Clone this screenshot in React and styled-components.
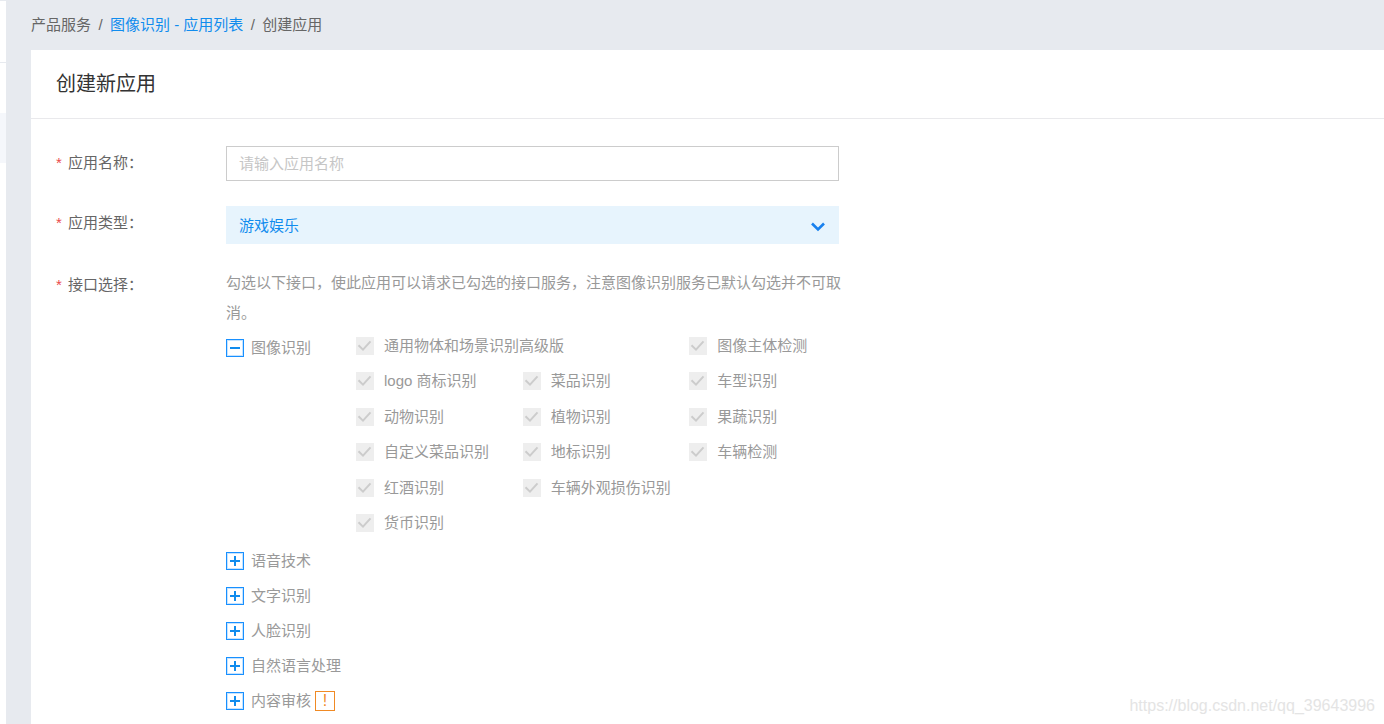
import React, { useState } from "react";
import styled, { createGlobalStyle } from "styled-components";

const imageApis = [
  { name: "通用物体和场景识别高级版", wide: true },
  { name: "图像主体检测" },
  { name: "logo 商标识别" },
  { name: "菜品识别" },
  { name: "车型识别" },
  { name: "动物识别" },
  { name: "植物识别" },
  { name: "果蔬识别" },
  { name: "自定义菜品识别" },
  { name: "地标识别" },
  { name: "车辆检测" },
  { name: "红酒识别" },
  { name: "车辆外观损伤识别", wide: true },
  { name: "货币识别" },
];

const groups = [
  { id: "image", name: "图像识别", apis: imageApis },
  { id: "speech", name: "语音技术" },
  { id: "ocr", name: "文字识别" },
  { id: "face", name: "人脸识别" },
  { id: "nlp", name: "自然语言处理" },
  { id: "censor", name: "内容审核", warn: true },
];

const ToggleIcon = ({ open }) => (
  <svg width="18" height="18" viewBox="0 0 18 18" fill="none" aria-hidden="true">
    <rect x="1" y="1" width="16" height="16" stroke="#1890ff" strokeWidth="2" strokeOpacity="0.25" />
    <rect x="0.5" y="0.5" width="17" height="17" stroke="#1890ff" />
    <path d={open ? "M4 9H14" : "M4 9H14M9 4V14"} stroke="#108cee" strokeWidth="2" />
  </svg>
);

const ApiGroup = ({ group, open, onToggle }) => (
  <Group>
    <GroupHead>
      <Toggle type="button" $open={open} aria-expanded={open} onClick={onToggle}>
        <ToggleIcon open={open} />
        {group.name}
      </Toggle>
      {group.warn && <Warn>!</Warn>}
    </GroupHead>
    {open && group.apis && (
      <ApiGrid>
        {group.apis.map((api) => (
          <ApiLabel key={api.name} $wide={api.wide}>
            <CheckWrap>
              <Check type="checkbox" defaultChecked disabled />
              <CheckMark viewBox="0 0 18 18" fill="none" aria-hidden="true">
                <path d="M2.5 8.2L7 12.6L14.5 4.4" stroke="#ccc" strokeWidth="2" />
              </CheckMark>
            </CheckWrap>
            {api.name}
          </ApiLabel>
        ))}
      </ApiGrid>
    )}
  </Group>
);

const App = () => {
  const [openId, setOpenId] = useState("image");

  return (
    <>
      <GlobalStyle />
      <Page>
        <Side>
          <SideTop />
          <SideGap />
          <SideActive />
        </Side>
        <Main>
          <Breadcrumb>
            <span>产品服务</span>
            <Slash>/</Slash>
            <a href="#list">图像识别 - 应用列表</a>
            <Slash>/</Slash>
            <span>创建应用</span>
          </Breadcrumb>
          <Card>
            <Title>创建新应用</Title>
            <Form>
              <Row>
                <Label htmlFor="appName">
                  <Star>*</Star>应用名称：
                </Label>
                <Field>
                  <Input id="appName" type="text" placeholder="请输入应用名称" />
                </Field>
              </Row>
              <Row>
                <Label htmlFor="appType">
                  <Star>*</Star>应用类型：
                </Label>
                <Field>
                  <SelectWrap>
                    <Select id="appType" defaultValue="game">
                      <option value="game">游戏娱乐</option>
                    </Select>
                    <Arrow viewBox="0 0 16 10" fill="none" aria-hidden="true">
                      <path d="M2 1.5L8 7.5L14 1.5" stroke="#1880ee" strokeWidth="2.6" />
                    </Arrow>
                  </SelectWrap>
                </Field>
              </Row>
              <Row>
                <Label as="div" id="apiLabel">
                  <Star>*</Star>接口选择：
                </Label>
                <Field role="group" aria-labelledby="apiLabel">
                  <Desc>
                    勾选以下接口，使此应用可以请求已勾选的接口服务，注意图像识别服务已默认勾选并不可取消。
                  </Desc>
                  {groups.map((group) => (
                    <ApiGroup
                      key={group.id}
                      group={group}
                      open={openId === group.id}
                      onToggle={() => setOpenId(openId === group.id ? "" : group.id)}
                    />
                  ))}
                </Field>
              </Row>
            </Form>
          </Card>
        </Main>
        <Watermark>https://blog.csdn.net/qq_39643996</Watermark>
      </Page>
    </>
  );
};

const GlobalStyle = createGlobalStyle`
  * {
    box-sizing: border-box;
  }

  body {
    margin: 0;
    background: #e7eaef;
    color: #666;
    font-family: "Liberation Sans", "Noto Sans CJK SC", sans-serif;
    font-size: 15px;
  }

  input, select, button {
    font: inherit;
  }
`;

const Page = styled.div`
  position: relative;
  display: flex;
  min-height: 100vh;
`;

const Side = styled.aside`
  width: 6px;
  flex-shrink: 0;
  background: #fff;
  border-top: 1px solid #e7eaef;
`;

const SideTop = styled.div`
  height: 62px;
  border-bottom: 1px solid #e7eaef;
`;

const SideGap = styled.div`
  height: 50px;
`;

const SideActive = styled.div`
  height: 50px;
  background: #f5f7fb;
`;

const Main = styled.main`
  flex: 1;
  min-width: 0;
  display: flex;
  flex-direction: column;
  padding-left: 25px;
`;

const Breadcrumb = styled.nav`
  display: flex;
  height: 50px;
  line-height: 50px;

  a {
    color: #108cee;
    text-decoration: none;
  }
`;

const Slash = styled.span`
  width: 19px;
  text-align: center;
`;

const Card = styled.section`
  flex: 1;
  background: #fff;
`;

const Title = styled.h1`
  margin: 0;
  padding: 0 25px;
  line-height: 68px;
  border-bottom: 1px solid #e9e9ec;
  color: #333;
  font-size: 20px;
  font-weight: 400;
`;

const Form = styled.form`
  display: flex;
  flex-direction: column;
  gap: 24px;
  padding: 27px 25px 0;
`;

const Row = styled.div`
  display: flex;
  min-height: 36px;
`;

const Label = styled.label`
  width: 170px;
  flex-shrink: 0;
  line-height: 34px;
`;

const Star = styled.span`
  display: inline-block;
  width: 12px;
  color: #ea4a4a;
`;

const Field = styled.div`
  flex: 0 1 632px;
  min-width: 0;
`;

const Input = styled.input`
  display: block;
  width: 100%;
  max-width: 613px;
  height: 35px;
  padding: 0 12px;
  border: 1px solid #ccc;
  border-radius: 0;
  outline: none;
  color: #666;

  &::placeholder {
    color: #c6c6c6;
    opacity: 1;
  }
`;

const SelectWrap = styled.div`
  position: relative;
  max-width: 613px;
`;

const Select = styled.select`
  display: block;
  width: 100%;
  height: 38px;
  padding: 0 13px;
  border: 0;
  border-radius: 0;
  outline: none;
  appearance: none;
  background: #e7f4fd;
  color: #108cee;
`;

const Arrow = styled.svg`
  position: absolute;
  top: 16px;
  right: 13px;
  width: 16px;
  height: 10px;
  pointer-events: none;
`;

const Desc = styled.p`
  max-width: 620px;
  margin: 0;
  line-height: 30px;
  color: #999;
`;

const Group = styled.div`
  display: flex;
  align-items: flex-start;
  color: #999;
`;

const GroupHead = styled.div`
  display: flex;
  align-items: center;
  width: 130px;
  flex-shrink: 0;
`;

const Toggle = styled.button`
  display: flex;
  align-items: center;
  gap: 7px;
  height: ${(props) => (props.$open ? 40 : 35)}px;
  padding: 0;
  border: 0;
  background: none;
  color: #999;
  line-height: 20px;
  white-space: nowrap;
  cursor: pointer;
`;

const Warn = styled.span`
  width: 20px;
  height: 20px;
  margin-left: 4px;
  border: 1px solid #f08a24;
  color: #f08a24;
  font-size: 16px;
  line-height: 18px;
  text-align: center;
`;

const ApiGrid = styled.div`
  display: grid;
  grid-template-columns: repeat(3, 1fr);
  grid-auto-rows: 1fr;
  width: 500px;
  height: 213px;
  margin-bottom: 2px;
`;

const ApiLabel = styled.label`
  display: flex;
  align-items: center;
  gap: 10px;
  grid-column: span ${(props) => (props.$wide ? 2 : 1)};
  line-height: 20px;
  white-space: nowrap;
`;

const CheckWrap = styled.span`
  position: relative;
  width: 18px;
  height: 18px;
`;

const Check = styled.input`
  display: block;
  width: 18px;
  height: 18px;
  margin: 0;
  appearance: none;
  background: #eee;
`;

const CheckMark = styled.svg`
  position: absolute;
  inset: 0;
  width: 18px;
  height: 18px;
`;

const Watermark = styled.div`
  position: absolute;
  right: 9px;
  bottom: 9px;
  color: #e4e4e4;
  font-size: 16px;
  line-height: 18px;
`;

export default App;
